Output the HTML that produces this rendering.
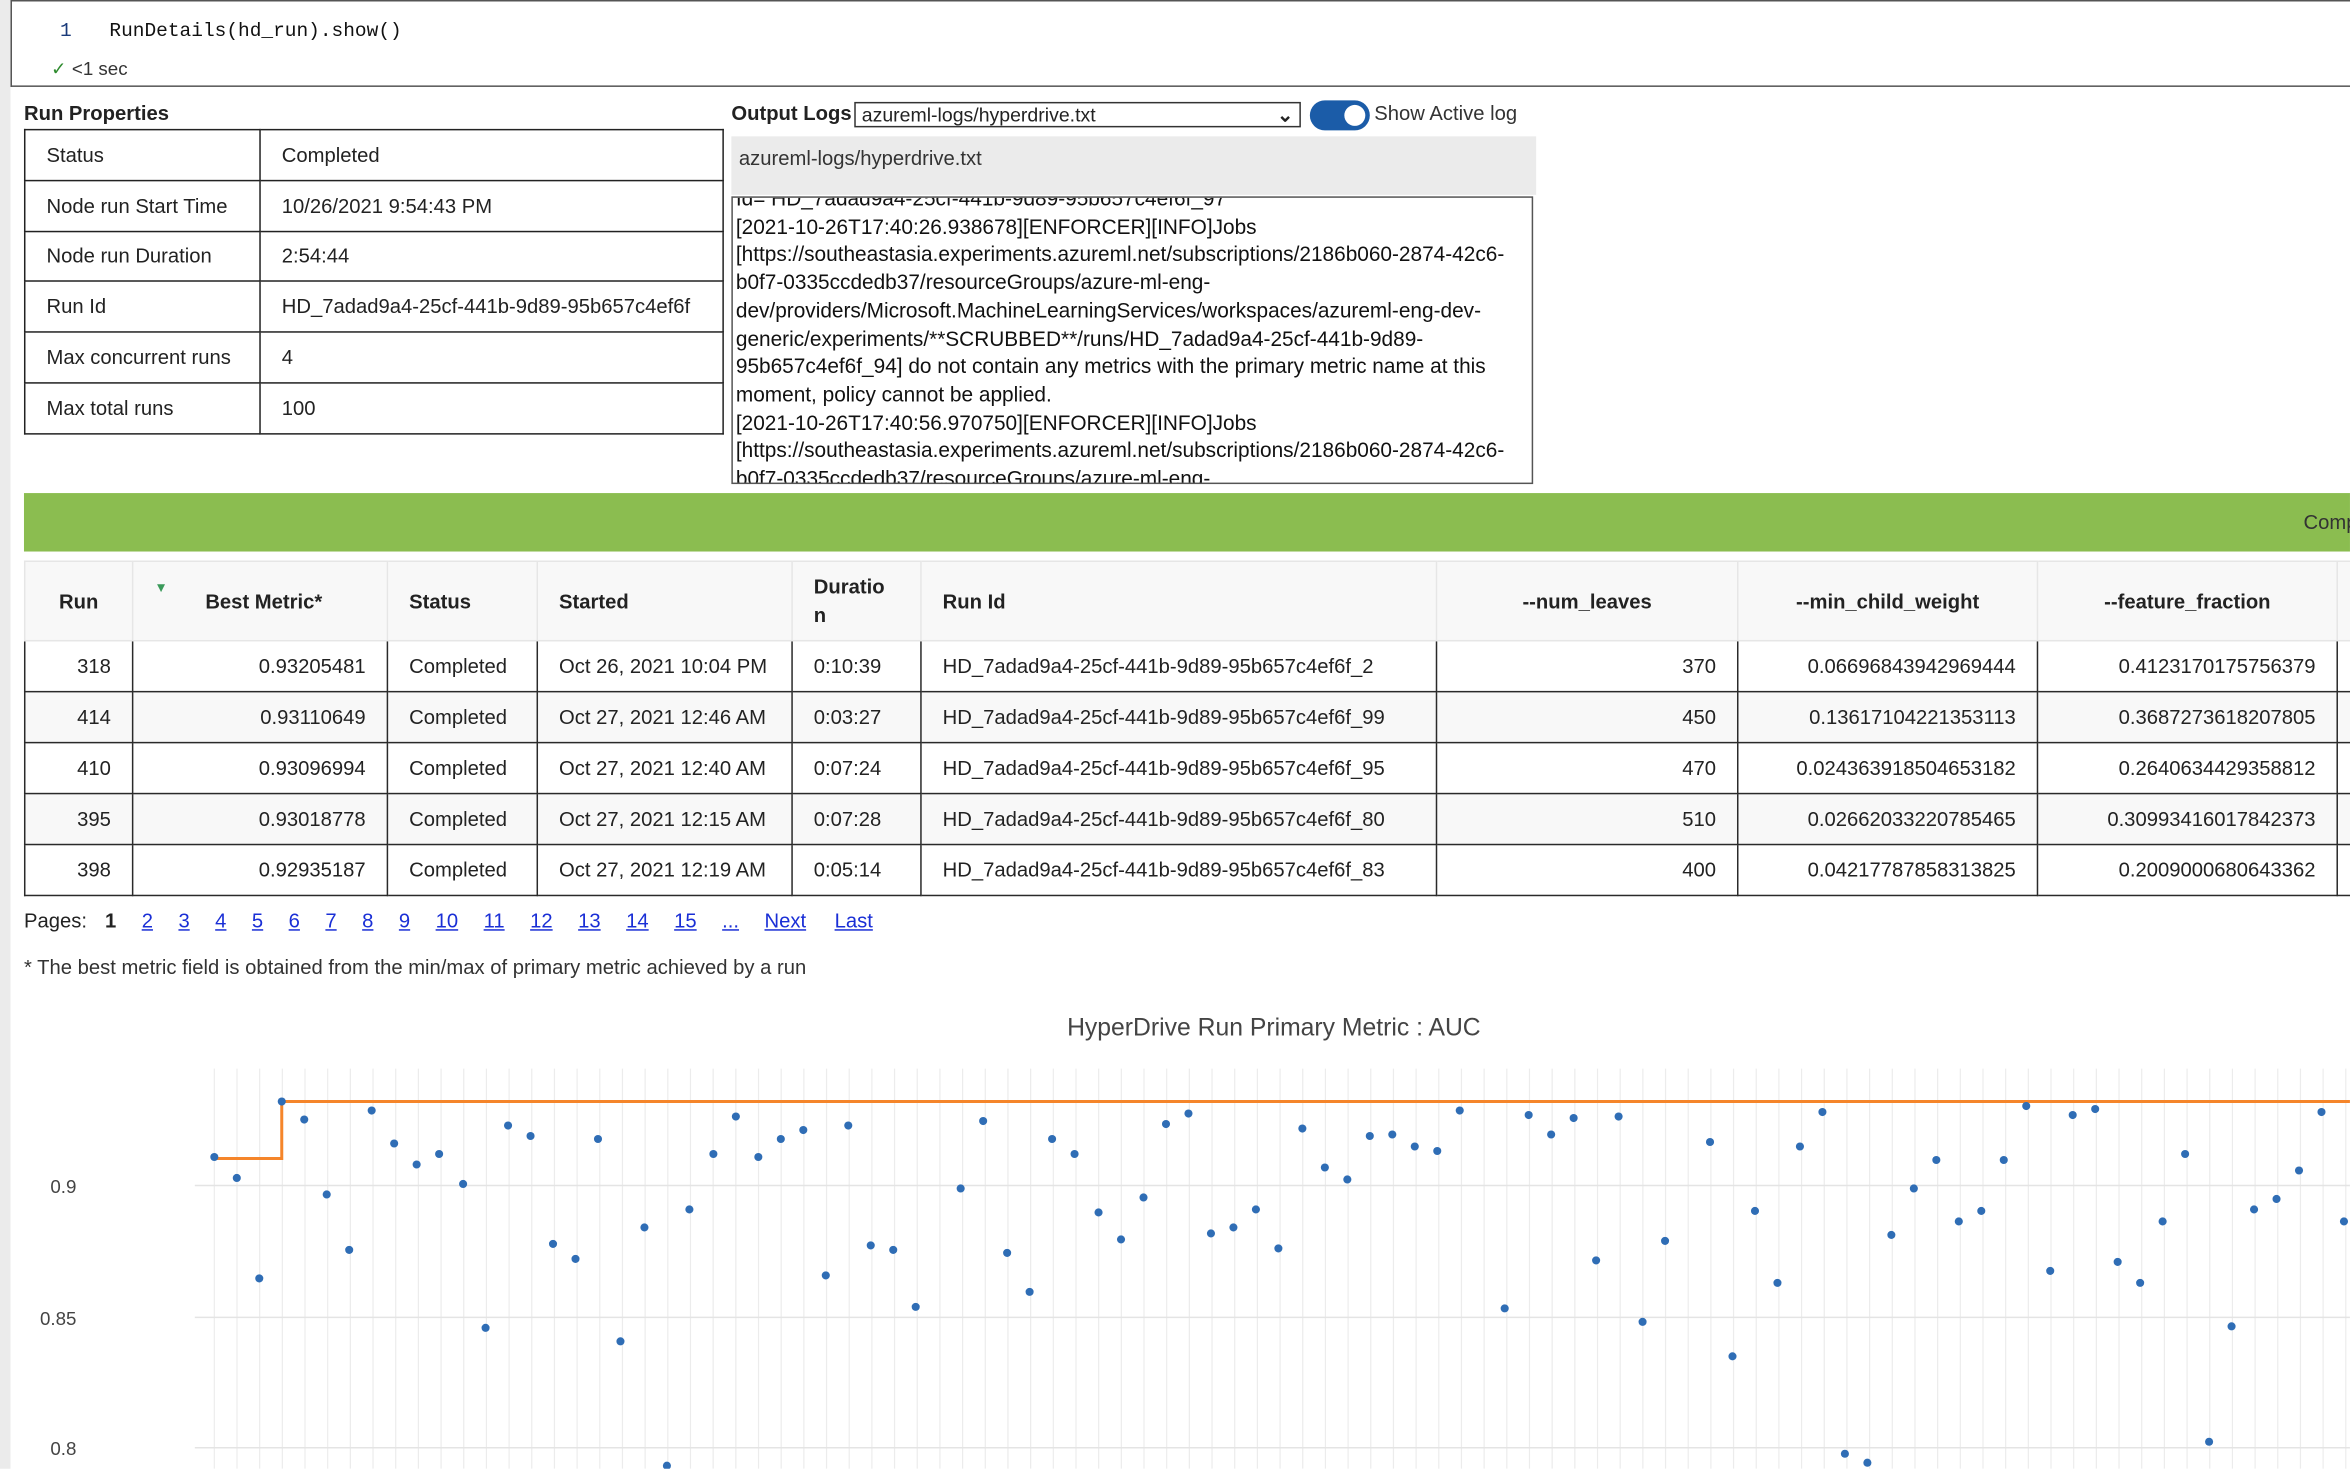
<!DOCTYPE html>
<html><head><meta charset="utf-8"><style>
html,body{margin:0;padding:0;width:2350px;height:1468px;overflow:hidden;background:#fff}
#s{position:absolute;left:0;top:0;width:1568px;height:980px;transform:scale(1.4987);transform-origin:0 0;font-family:"Liberation Sans",sans-serif;font-size:13.5px;color:#222}
.a{position:absolute;white-space:nowrap}
table{border-collapse:collapse;position:absolute;table-layout:fixed}
#p td{border:1.5px solid #222;height:32.8px;padding:0 0 0 14px;font-size:13.5px}
#r td{border:1.3px solid #2a2a2a;height:33px;padding:0 14px;font-size:13.5px}
#r tr.h td{border:1px solid #e6e6e6;background:#f7f7f7;height:52px;font-weight:bold}
#r tr:nth-child(odd) td{background:#f8f8f8}
.R{text-align:right}
.pg a{color:#1a2fd6;text-decoration:underline}
.pg span{display:inline-block;margin-right:17px}
</style></head><body><div id="s">
<div class="a" style="left:0;top:0;width:7px;height:980px;background:#ebebeb"></div>
<div class="a" style="left:7px;top:0;width:1561px;height:56px;border:1.3px solid #555;border-right:none;background:#fff"></div>
<div class="a" style="left:40px;top:13px;font-family:'Liberation Mono',monospace;font-size:13px;color:#1a3a7a">1</div>
<div class="a" style="left:73px;top:13px;font-family:'Liberation Mono',monospace;font-size:13px;color:#111">RunDetails(hd_run).show()</div>
<div class="a" style="left:34px;top:38px;font-size:12.5px;color:#333"><span style="color:#2e8b2e">✓</span> &lt;1 sec</div>

<div class="a" style="left:16px;top:68px;font-weight:bold">Run Properties</div>
<table id="p" style="left:16px;top:86px;width:467px">
<col style="width:157px"><col>
<tr><td>Status</td><td>Completed</td></tr>
<tr><td>Node run Start Time</td><td>10/26/2021 9:54:43 PM</td></tr>
<tr><td>Node run Duration</td><td>2:54:44</td></tr>
<tr><td>Run Id</td><td>HD_7adad9a4-25cf-441b-9d89-95b657c4ef6f</td></tr>
<tr><td>Max concurrent runs</td><td>4</td></tr>
<tr><td>Max total runs</td><td>100</td></tr>
</table>

<div class="a" style="left:488px;top:68px;font-weight:bold">Output Logs</div>
<div class="a" style="left:570px;top:68px;height:17px;border:1px solid #333;font-size:13px;line-height:16px;padding-left:4px;box-sizing:border-box;width:298px">azureml-logs/hyperdrive.txt<span style="position:absolute;right:4px;top:0;font-weight:bold">⌄</span></div>
<div class="a" style="left:874px;top:67px;width:40px;height:20px;border-radius:10px;background:#1b5ca8"></div>
<div class="a" style="left:897px;top:70px;width:14px;height:14px;border-radius:7px;background:#fff"></div>
<div class="a" style="left:917px;top:68px;color:#333">Show Active log</div>
<div class="a" style="left:488px;top:91px;width:537px;height:39px;background:#ebebeb"></div>
<div class="a" style="left:493px;top:98px;color:#333">azureml-logs/hyperdrive.txt</div>
<div class="a" style="left:488px;top:131px;width:533px;height:190px;border:1.3px solid #555;overflow:hidden;background:#fff">
<div style="position:absolute;left:2px;top:-9px;font-size:13.9px;line-height:18.7px;white-space:nowrap;width:525px;color:#111">Id= HD_7adad9a4-25cf-441b-9d89-95b657c4ef6f_97<br>[2021-10-26T17:40:26.938678][ENFORCER][INFO]Jobs<br>[https://southeastasia.experiments.azureml.net/subscriptions/2186b060-2874-42c6-<br>b0f7-0335ccdedb37/resourceGroups/azure-ml-eng-<br>dev/providers/Microsoft.MachineLearningServices/workspaces/azureml-eng-dev-<br>generic/experiments/**SCRUBBED**/runs/HD_7adad9a4-25cf-441b-9d89-<br>95b657c4ef6f_94] do not contain any metrics with the primary metric name at this<br>moment, policy cannot be applied.<br>[2021-10-26T17:40:56.970750][ENFORCER][INFO]Jobs<br>[https://southeastasia.experiments.azureml.net/subscriptions/2186b060-2874-42c6-<br>b0f7-0335ccdedb37/resourceGroups/azure-ml-eng-</div></div>

<div class="a" style="left:16px;top:329px;width:1552px;height:39px;background:#8bbd50"></div>
<div class="a" style="left:1537px;top:341px;color:#333">Comp</div>

<table id="r" style="left:16px;top:374px;width:1570px">
<col style="width:72px"><col style="width:170px"><col style="width:100px"><col style="width:170px"><col style="width:86px"><col style="width:344px"><col style="width:201px"><col style="width:200px"><col style="width:200px"><col>
<tr class="h"><td style="text-align:center">Run</td><td style="position:relative;padding-left:48px"><span style="position:absolute;left:14px;top:12px;color:#3a9a5a;font-size:9px">▼</span>Best Metric*</td><td>Status</td><td>Started</td><td style="line-height:19px">Duratio<br>n</td><td>Run Id</td><td style="text-align:center">--num_leaves</td><td style="text-align:center">--min_child_weight</td><td style="text-align:center">--feature_fraction</td><td></td></tr>
<tr><td class="R">318</td><td class="R">0.93205481</td><td>Completed</td><td>Oct 26, 2021 10:04 PM</td><td>0:10:39</td><td>HD_7adad9a4-25cf-441b-9d89-95b657c4ef6f_2</td><td class="R">370</td><td class="R">0.06696843942969444</td><td class="R">0.4123170175756379</td><td></td></tr>
<tr><td class="R">414</td><td class="R">0.93110649</td><td>Completed</td><td>Oct 27, 2021 12:46 AM</td><td>0:03:27</td><td>HD_7adad9a4-25cf-441b-9d89-95b657c4ef6f_99</td><td class="R">450</td><td class="R">0.13617104221353113</td><td class="R">0.3687273618207805</td><td></td></tr>
<tr><td class="R">410</td><td class="R">0.93096994</td><td>Completed</td><td>Oct 27, 2021 12:40 AM</td><td>0:07:24</td><td>HD_7adad9a4-25cf-441b-9d89-95b657c4ef6f_95</td><td class="R">470</td><td class="R">0.024363918504653182</td><td class="R">0.2640634429358812</td><td></td></tr>
<tr><td class="R">395</td><td class="R">0.93018778</td><td>Completed</td><td>Oct 27, 2021 12:15 AM</td><td>0:07:28</td><td>HD_7adad9a4-25cf-441b-9d89-95b657c4ef6f_80</td><td class="R">510</td><td class="R">0.02662033220785465</td><td class="R">0.30993416017842373</td><td></td></tr>
<tr><td class="R">398</td><td class="R">0.92935187</td><td>Completed</td><td>Oct 27, 2021 12:19 AM</td><td>0:05:14</td><td>HD_7adad9a4-25cf-441b-9d89-95b657c4ef6f_83</td><td class="R">400</td><td class="R">0.04217787858313825</td><td class="R">0.2009000680643362</td><td></td></tr>
</table>

<div class="a pg" style="left:16px;top:607px"><span style="margin-right:12px">Pages:</span><span><b>1</b></span><span><a>2</a></span><span><a>3</a></span><span><a>4</a></span><span><a>5</a></span><span><a>6</a></span><span><a>7</a></span><span><a>8</a></span><span><a>9</a></span><span><a>10</a></span><span><a>11</a></span><span><a>12</a></span><span><a>13</a></span><span><a>14</a></span><span><a>15</a></span><span><a>...</a></span><span style="margin-right:19px"><a>Next</a></span><span><a>Last</a></span></div>
<div class="a" style="left:16px;top:638px;color:#333">* The best metric field is obtained from the min/max of primary metric achieved by a run</div>
<div class="a" style="left:712px;top:677px;font-size:16.5px;color:#444">HyperDrive Run Primary Metric : AUC</div>

<svg class="a" style="left:0;top:700px" width="1568" height="280" viewBox="0 700 1568 280">
<g stroke="#ececec" stroke-width="0.8" id="vg"></g>
<g stroke="#e4e4e4" stroke-width="1"><line x1="130" y1="791" x2="1568" y2="791"/><line x1="130" y1="879" x2="1568" y2="879"/><line x1="130" y1="966" x2="1568" y2="966"/></g>
<g font-family="Liberation Sans,sans-serif" font-size="12.5" fill="#444" text-anchor="end"><text x="51" y="796">0.9</text><text x="51" y="884">0.85</text><text x="51" y="971">0.8</text></g>
<polyline fill="none" stroke="#f5852a" stroke-width="2" points="143,773 188,773 188,735 1568,735"/>
<g fill="#2f6db5" id="pts"></g>
</svg>
<script>
var g=document.getElementById('vg'),s='';
for(var x=143;x<1568;x+=15.13)s+='<line x1="'+x+'" y1="713" x2="'+x+'" y2="980"/>';
g.innerHTML=s;
var P=[143,772,158,786,173,853,188,735,203,747,218,797,233,834,248,741,263,763,278,777,293,770,309,790,324,886,339,751,354,758,369,830,384,840,399,760,414,895,430,819,445,978,460,807,476,770,491,745,506,772,521,760,536,754,551,851,566,751,581,831,596,834,611,872,641,793,656,748,672,836,687,862,702,760,717,770,733,809,748,827,763,799,778,750,793,743,808,823,823,819,838,807,853,833,869,753,884,779,899,787,914,758,929,757,944,765,959,768,974,741,1004,873,1020,744,1035,757,1050,746,1065,841,1080,745,1096,882,1111,828,1141,762,1156,905,1171,808,1186,856,1201,765,1216,742,1231,970,1246,976,1262,824,1277,793,1292,774,1307,815,1322,808,1337,774,1352,738,1368,848,1383,744,1398,740,1413,842,1428,856,1443,815,1458,770,1474,962,1489,885,1504,807,1519,800,1534,781,1549,742,1564,815];
s='';for(var i=0;i<P.length;i+=2)s+='<circle cx="'+P[i]+'" cy="'+P[i+1]+'" r="2.7"/>';
document.getElementById('pts').innerHTML=s;
</script>
</div></body></html>
